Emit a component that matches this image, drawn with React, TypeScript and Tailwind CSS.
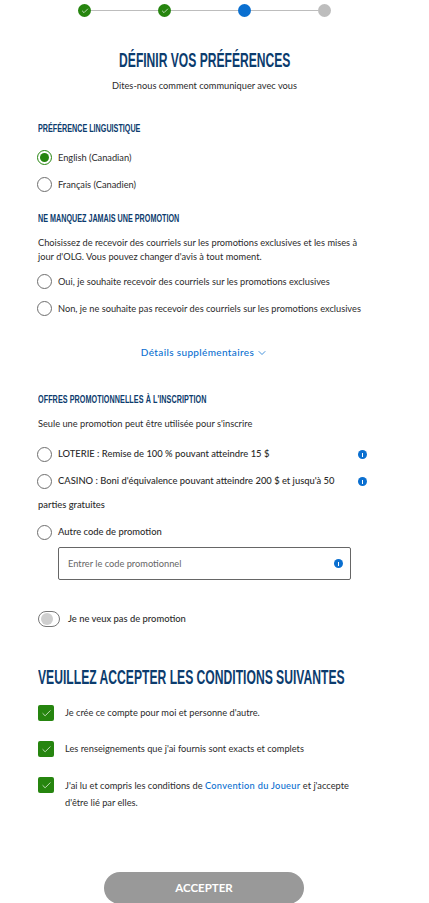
import { Check, ChevronDown } from 'lucide-react';

const heading = "font-['Liberation_Sans',sans-serif] font-bold text-[#0c3c6e] whitespace-nowrap";
const small = `${heading} origin-left scale-x-[0.72] text-[10px] leading-[14px]`;

function Radio({ checked = false }: { checked?: boolean }) {
  return (
    <span
      className={`-ml-[1px] flex h-[15px] w-[15px] shrink-0 items-center justify-center rounded-full border-[1.5px] bg-white ${
        checked ? 'border-[#26850f]' : 'border-[#6e6e6e]'
      }`}
    >
      {checked && <span className="h-[9px] w-[9px] rounded-full bg-[#26850f]" />}
    </span>
  );
}

function InfoDot() {
  return (
    <span className="flex h-[9px] w-[9px] items-center justify-center rounded-full bg-[#0a6fd0]">
      <span className="h-[4px] w-[1px] bg-white" />
    </span>
  );
}

function Step({ color, done = false }: { color: string; done?: boolean }) {
  return (
    <span className={`z-10 flex h-[13px] w-[13px] shrink-0 items-center justify-center rounded-full ${color}`}>
      {done && <Check size={8} strokeWidth={2} className="text-white" />}
    </span>
  );
}

function Tick() {
  return (
    <span className="flex h-[16px] w-[16px] shrink-0 items-center justify-center rounded-[2px] bg-[#26850f]">
      <Check size={11} strokeWidth={1.5} className="text-white" />
    </span>
  );
}

export default function App() {
  return (
    <div className="h-[903px] w-[429px] overflow-hidden bg-white font-['Lato',sans-serif] text-[9.25px] text-[#2b2b2b]">
      <div className="flex items-center pl-[78px] pt-[4px]">
        <Step color="bg-[#26850f]" done />
        <span className="h-[1px] w-[67px] bg-[#bdbdbd]" />
        <Step color="bg-[#26850f]" done />
        <span className="h-[1px] w-[67px] bg-[#bdbdbd]" />
        <Step color="bg-[#0a6fd0]" />
        <span className="h-[1px] w-[67px] bg-[#bdbdbd]" />
        <Step color="bg-[#bdbdbd]" />
      </div>

      <h1 className={`${heading} mt-[31px] -translate-x-[11px] scale-x-[0.62] pl-[4px] text-center text-[19.5px] leading-[24px]`}>DÉFINIR VOS PRÉFÉRENCES</h1>
      <p className="mt-[7px] pr-[20px] text-center leading-[14px]">Dites-nous comment communiquer avec vous</p>

      <div className="pl-[38px] pr-[60px]">
        <h2 className={`${small} mt-[29px]`}>PRÉFÉRENCE LINGUISTIQUE</h2>
        <div className="mt-[14px] flex h-[15px] items-center gap-[6px]">
          <Radio checked />
          <span>English (Canadian)</span>
        </div>
        <div className="mt-[12px] flex h-[15px] items-center gap-[6px]">
          <Radio />
          <span>Français (Canadien)</span>
        </div>

        <h2 className={`${small} mt-[20px]`}>NE MANQUEZ JAMAIS UNE PROMOTION</h2>
        <p className="mt-[10px] leading-[14px]">
          Choisissez de recevoir des courriels sur les promotions exclusives et les mises à jour d'OLG. Vous pouvez changer d'avis à tout moment.
        </p>
        <div className="mt-[10px] flex h-[15px] items-center gap-[6px]">
          <Radio />
          <span>Oui, je souhaite recevoir des courriels sur les promotions exclusives</span>
        </div>
        <div className="mt-[12px] flex h-[15px] items-center gap-[6px] whitespace-nowrap">
          <Radio />
          <span>Non, je ne souhaite pas recevoir des courriels sur les promotions exclusives</span>
        </div>

        <div className="mt-[29px] flex h-[15px] items-center justify-center gap-[2px] pl-[2px] text-[10px] font-medium tracking-[0.35px] text-[#0a6fd0]">
          <span className="whitespace-nowrap">Détails supplémentaires</span>
          <ChevronDown size={12} strokeWidth={1.5} />
        </div>

        <h2 className={`${small} mt-[33px] tracking-[0.1px]`}>OFFRES PROMOTIONNELLES À L'INSCRIPTION</h2>
        <p className="mt-[10px] leading-[14px]">Seule une promotion peut être utilisée pour s'inscrire</p>

        <div className="mr-[2px] mt-[16px] flex h-[15px] items-center gap-[6px] text-[9.4px] font-medium">
          <Radio />
          <span className="flex-1">LOTERIE : Remise de 100 % pouvant atteindre 15 $</span>
          <InfoDot />
        </div>
        <div className="mr-[2px] mt-[12px] flex h-[15px] items-center gap-[6px] text-[9.4px] font-medium">
          <Radio />
          <span className="flex-1">CASINO : Boni d'équivalence pouvant atteindre 200 $ et jusqu'à 50</span>
          <InfoDot />
        </div>
        <p className="mt-[9px] text-[9.4px] font-medium leading-[14px]">parties gratuites</p>
        <div className="mt-[13px] flex h-[15px] items-center gap-[6px] text-[9.4px] font-medium">
          <Radio />
          <span>Autre code de promotion</span>
        </div>

        <div className="ml-[20px] mt-[7px] flex h-[33px] w-[293px] items-center justify-between rounded-[2px] border border-[#666] pl-[9px] pr-[7px] text-[#666]">
          <span>Entrer le code promotionnel</span>
          <InfoDot />
        </div>

        <div className="mt-[31px] flex h-[16px] items-center gap-[8px] text-[9.4px] font-medium">
          <span className="flex h-[16px] w-[22px] items-center rounded-full border border-[#777] pl-[2px]">
            <span className="h-[12px] w-[12px] rounded-full bg-[#cfcfcf]" />
          </span>
          <span>Je ne veux pas de promotion</span>
        </div>

        <h2 className={`${heading} mt-[38px] origin-left scale-x-[0.622] text-[19.5px] leading-[24px]`}>VEUILLEZ ACCEPTER LES CONDITIONS SUIVANTES</h2>

        <div className="mt-[16px] flex items-center gap-[11px]">
          <Tick />
          <span>Je crée ce compte pour moi et personne d'autre.</span>
        </div>
        <div className="mt-[20px] flex items-center gap-[11px]">
          <Tick />
          <span>Les renseignements que j'ai fournis sont exacts et complets</span>
        </div>
        <div className="mt-[20px] flex items-start gap-[11px]">
          <Tick />
          <p className="leading-[17px]">
            J'ai lu et compris les conditions de <span className="font-medium tracking-[0.3px] text-[#0a6fd0]">Convention du Joueur</span> et j'accepte d'être lié par elles.
          </p>
        </div>
      </div>

      <div className="mt-[61px] flex justify-center">
        <button className="ml-[-21px] h-[32px] w-[200px] rounded-full bg-[#999] text-[11.5px] font-bold text-white">ACCEPTER</button>
      </div>
    </div>
  );
}
